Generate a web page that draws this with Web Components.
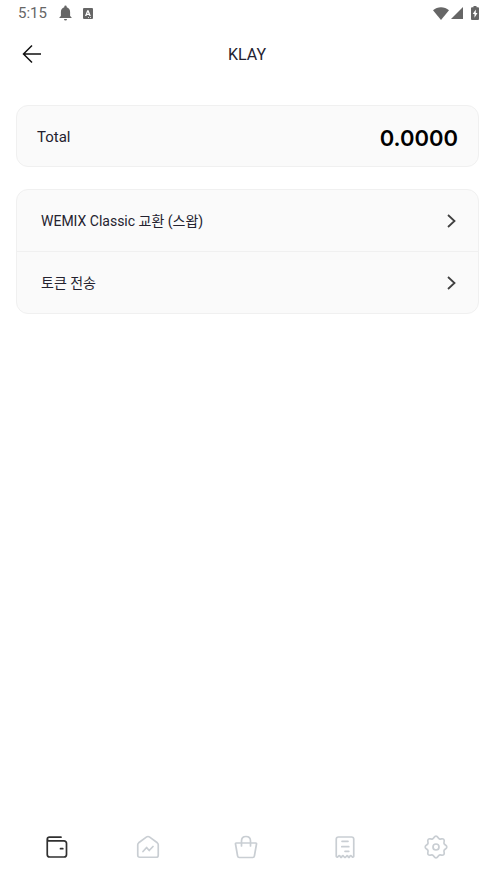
<!DOCTYPE html>
<html lang="ko">
<head>
<meta charset="utf-8">
<meta name="viewport" content="width=device-width, initial-scale=1">
<title>KLAY</title>
<style>
body { margin: 0; background: #fff; color: #24222f; font-family: Roboto, "Noto Sans CJK KR", sans-serif; }
</style>
</head>
<body>
<wallet-screen></wallet-screen>
<script>
const define = (name, html, setup) => {
  const template = document.createElement('template');
  template.innerHTML = html;
  customElements.define(name, class extends HTMLElement {
    constructor() {
      super();
      this.attachShadow({ mode: 'open' }).append(template.content.cloneNode(true));
    }
    connectedCallback() { if (setup) setup(this, this.shadowRoot); }
  });
};

define('status-bar', `
<style>
:host { display: flex; justify-content: space-between; align-items: center; height: 26px; padding: 0 15px 0 18px; color: #666; }
div { display: flex; align-items: center; }
time { font-size: 15px; line-height: 20px; margin-right: 12px; }
svg { display: block; fill: currentColor; }
.bell { margin-right: 11px; }
.wifi { margin-right: 2px; }
.signal { margin-right: 8px; }
</style>
<div>
  <time>5:15</time>
  <svg class="bell" width="13" height="16" viewBox="0 0 13 16" aria-hidden="true"><path d="M6.5 0.5a1.2 1.2 0 0 1 1.2 1.2v.5c2.2.6 3.4 2.4 3.4 4.7v4L12.6 12.4v.7H.4v-.7l1.5-1.5v-4c0-2.3 1.2-4.1 3.4-4.7v-.5A1.2 1.2 0 0 1 6.5.5zM5 13.9h3a1.5 1.5 0 0 1-3 0z"/></svg>
  <svg width="10" height="11" viewBox="0 0 10 11" aria-hidden="true"><path fill-rule="evenodd" d="M1 0h8q1 0 1 1v9q0 1-1 1H1q-1 0-1-1V1q0-1 1-1zM4.2 2.2 2 8h1.4l.4-1.1h2.2L6.4 8h1.4L5.6 2.200zM4.900 4l.6 1.900H4.300zM5 9v.7h1V9zM7 9v.7h1V9z"/></svg>
</div>
<div>
  <svg class="wifi" width="16" height="13" viewBox="0 0 16 13" aria-hidden="true"><path d="M8 13 0 3.2C4.5-.8 11.5-.8 16 3.2z"/></svg>
  <svg class="signal" width="12" height="12" viewBox="0 0 12 12" aria-hidden="true"><path d="M12 0v12H0z"/></svg>
  <svg width="8" height="14" viewBox="0 0 8 14" aria-hidden="true"><path fill-rule="evenodd" d="M2.500 0h3v1.200H7q1 0 1 1V13q0 1-1 1H1q-1 0-1-1V2.200q0-1 1-1h1.500zM4.800 3.500 1.700 8h1.800v3.700L6.500 7H4.800z"/></svg>
</div>`);

define('title-bar', `
<style>
:host { display: grid; grid-template-columns: 32px 1fr 32px; align-items: center; height: 56px; padding: 0 16px; }
h1 { margin: 0; padding-top: 2px; text-align: center; font-size: 16px; line-height: 24px; font-weight: 400; }
button { display: grid; place-items: center; width: 32px; height: 32px; padding: 0; border: 0; background: none; color: #111; }
</style>
<button type="button" aria-label="뒤로"><svg width="20" height="20" viewBox="0 0 20 20" fill="none" stroke="currentColor" stroke-width="1.5"><path d="M19 10H1.5M10 1.5 1.5 10l8.5 8.5"/></svg></button>
<h1><slot></slot></h1>`);

define('surface-card', `
<style>
:host { display: block; border: 1px solid #f0f0f0; border-radius: 12px; background: #fafafa; overflow: hidden; }
</style>
<slot></slot>`);

define('total-balance', `
<style>
:host { display: flex; justify-content: space-between; align-items: center; height: 60px; padding: 0 20px; }
.label { padding-top: 2px; font-size: 15px; line-height: 20px; font-weight: 400; }
.amount { font: 600 22px/28px Inter, sans-serif; color: #000; padding-top: 4px; }
</style>
<span class="label"><slot name="label"></slot></span>
<span class="amount"><slot></slot></span>`);

define('action-row', `
<style>
:host { display: block; }
:host(:not(:first-child)) { border-top: 1px solid #f0f0f0; }
button { display: flex; justify-content: space-between; align-items: center; width: 100%; height: 61px; padding: 0 22px 0 24px; border: 0; background: none; color: inherit; font: 400 14px/20px Roboto, "Noto Sans CJK KR", sans-serif; text-align: left; }
svg { color: #404040; }
</style>
<button type="button"><span><slot></slot></span><svg width="10" height="14" viewBox="0 0 10 14" fill="none" stroke="currentColor" stroke-width="1.8" aria-hidden="true"><path d="m2 1 6.5 6-6.5 6"/></svg></button>`);

const icons = {
  wallet: '<path d="M16 2.200H4.500A2.250 2.250 0 0 0 2.250 4.250V19.500A2.500 2.500 0 0 0 4.750 22H19A2.500 2.500 0 0 0 21.500 19.500V8.300A2.500 2.500 0 0 0 19 5.800H4.250A2 2 0 0 1 2.250 4M15.500 13.700h2.300"/>',
  home: '<path d="M10.3 2.1Q12 .9 13.7 2.1L21.3 7.8Q22.250 8.600 22.250 9.800V20.200Q22.250 22.250 20.200 22.250H3.800Q1.750 22.250 1.750 20.200V9.800Q1.750 8.600 2.700 7.800zM7 16.500l3.600-4 2.600 3 3.800-4"/>',
  bag: '<path d="M2.3 8h19.4q1 0 .8 1l-2.1 12q-.2 1.5-1.7 1.5H5.3q-1.5 0-1.7-1.5L1.5 9q-.2-1 .8-1zM7.500 11V6q0-4.500 4.500-4.500t4.500 4.500v5"/>',
  receipt: '<path d="M3.250 21V4.250Q3.250 2 5.500 2H18.500Q20.750 2 20.750 4.250V21Q20.750 22.400 19.500 22.100L17.900 20.700Q17 20.500 16.400 22.300H15.400Q14.800 20.500 13.900 20.700L12.500 22.300H11.500L10.100 20.700Q9.200 20.500 8.600 22.300H7.600Q7 20.500 6.100 20.700L4.500 22.100Q3.250 22.400 3.250 21zM9 6.300h6M8.800 11.700h7M12 16.300h3.800"/>',
  settings: '<path d="M12 1.2C14.1 1.2 13.7 3.2 15.4 3.9 17.1 4.6 18.2 2.8 19.7 4.3 21.2 5.8 19.4 6.9 20.1 8.6 20.8 10.3 22.8 9.9 22.8 12 22.8 14.1 20.8 13.7 20.1 15.4 19.4 17.1 21.2 18.2 19.7 19.7 18.2 21.2 17.1 19.4 15.4 20.1 13.7 20.8 14.1 22.8 12 22.8 9.9 22.8 10.3 20.8 8.6 20.1 6.9 19.4 5.8 21.2 4.3 19.7 2.8 18.2 4.6 17.1 3.9 15.4 3.2 13.7 1.2 14.1 1.2 12 1.2 9.9 3.2 10.3 3.9 8.6 4.6 6.9 2.8 5.8 4.3 4.3 5.8 2.8 6.9 4.6 8.6 3.9 10.3 3.2 9.9 1.2 12 1.2z"/><circle cx="12" cy="12" r="3"/>'
};

define('nav-item', `
<style>
:host { display: grid; place-items: center; color: #c9ced3; }
:host([current]) { color: #303030; }
a { display: grid; place-items: center; width: 40px; height: 40px; color: inherit; }
svg { display: block; fill: none; stroke: currentColor; stroke-width: 1.7; stroke-linecap: round; stroke-linejoin: round; }
</style>
<a href="#"><svg width="24" height="24" viewBox="0 0 24 24" aria-hidden="true"></svg></a>`, (host, root) => {
  root.querySelector('svg').innerHTML = icons[host.getAttribute('icon')];
  root.querySelector('a').setAttribute('aria-label', host.getAttribute('label'));
  if (host.hasAttribute('current')) root.querySelector('a').setAttribute('aria-current', 'page');
});

define('bottom-nav', `
<style>
nav { display: grid; grid-template-columns: 6fr 6fr 7fr 6fr 6fr; align-items: center; height: 62px; padding: 0 13px 0 12px; }
</style>
<nav><slot></slot></nav>`);

define('wallet-screen', `
<style>
:host { display: flex; flex-direction: column; min-height: 100vh; }
main { flex: 1; display: flex; flex-direction: column; gap: 22px; padding: 23px 15px 24px 16px; }
</style>
<status-bar></status-bar>
<title-bar>KLAY</title-bar>
<main>
  <surface-card><total-balance><span slot="label">Total</span>0.0000</total-balance></surface-card>
  <surface-card>
    <action-row>WEMIX Classic 교환 (스왑)</action-row>
    <action-row>토큰 전송</action-row>
  </surface-card>
</main>
<bottom-nav>
  <nav-item icon="wallet" label="지갑" current></nav-item>
  <nav-item icon="home" label="홈"></nav-item>
  <nav-item icon="bag" label="상점"></nav-item>
  <nav-item icon="receipt" label="내역"></nav-item>
  <nav-item icon="settings" label="설정"></nav-item>
</bottom-nav>`);
</script>
</body>
</html>
